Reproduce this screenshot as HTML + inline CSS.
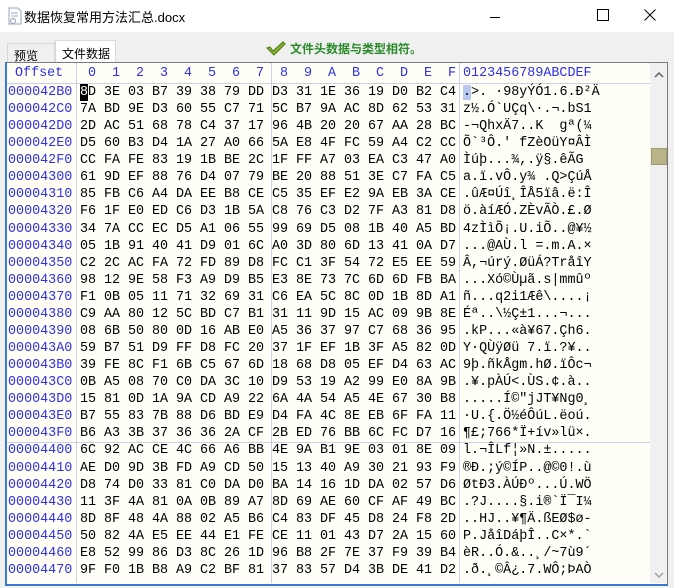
<!DOCTYPE html>
<html><head><meta charset="utf-8"><style>
*{margin:0;padding:0;box-sizing:border-box}
body{width:674px;height:588px;background:#f0f0f0;position:relative;overflow:hidden;font-family:"Liberation Sans","Noto Sans CJK SC",sans-serif}
#title{position:absolute;left:0;top:0;width:674px;height:32px;background:#fff}
#title .t{position:absolute;left:24px;top:7px;font-size:13px;color:#000}
#tabs .tab{position:absolute;font-size:12px;color:#000;border:1px solid #d9d9d9;border-bottom:none;white-space:nowrap}
#panel{position:absolute;left:5px;top:62px;width:663px;height:524px;border:1px solid #7a7a7a;border-left:2px solid #3a78d8;border-bottom:2px solid #3a78d8;background:#fffff8;overflow:hidden}
.mono{font-family:"Liberation Mono",monospace;font-size:13.4px;white-space:pre}
.row{position:absolute;left:0;height:17px;line-height:17px}
.off{position:absolute;left:1px;color:#3030e8}
.hx{position:absolute;left:73px;color:#000}
.hx span{display:inline-block;width:24px}
.hh{position:absolute;left:73px;color:#3030e8}
.hh span{display:inline-block;width:24px;text-align:center}
.as{position:absolute;left:456px;color:#000}
.vl{position:absolute;top:0;width:1px;background:#c8d0ec;height:520px}
#sb{position:absolute;left:643px;top:0;width:18px;height:520px;background:#f0f0f0}
</style></head><body>
<div id="title">
<svg style="position:absolute;left:7px;top:7px" width="16" height="18" viewBox="0 0 16 18"><path d="M2 1h9l3 3v13H2z" fill="#fff" stroke="#9aa4c0"/><path d="M4 6h7M4 9h7M4 12h4" stroke="#9aa4c0"/><circle cx="6" cy="14" r="2.5" fill="none" stroke="#9aa4c0"/></svg>
<div class="t">数据恢复常用方法汇总.docx</div>
<svg style="position:absolute;left:488px;top:10px" width="14" height="14"><path d="M2 7.5h10" stroke="#000"/></svg>
<svg style="position:absolute;left:596px;top:8px" width="14" height="14"><rect x="1.5" y="1.5" width="11" height="11" fill="none" stroke="#000"/></svg>
<svg style="position:absolute;left:643px;top:8px" width="14" height="14"><path d="M1.5 1.5l11 11M12.5 1.5l-11 11" stroke="#000"/></svg>
</div>
<div id="tabs">
<div class="tab" style="left:7px;top:43px;width:48px;height:20px;padding:3px 0 0 6px">预览</div>
<div class="tab" style="left:55px;top:40px;width:61px;height:23px;background:#fff;padding:4px 0 0 6px">文件数据</div>
</div>
<svg style="position:absolute;left:265px;top:40px" width="22" height="16" viewBox="0 0 22 16"><path d="M2 8l3 -1 3 4 10-9 2 2-11 11z" fill="#8ab030" stroke="#4a7a10" stroke-width="1"/></svg>
<div style="position:absolute;left:290px;top:40px;font-size:12px;font-weight:bold;color:#2a8a2a">文件头数据与类型相符。</div>
<div id="panel">
<div class="vl" style="left:69px"></div>
<div class="vl" style="left:264px"></div>
<div class="vl" style="left:452px"></div>
<div style="position:absolute;left:0;top:20px;width:643px;height:1px;background:#c8d0ec"></div>
<div style="position:absolute;left:0;top:379px;width:643px;height:1px;background:#c8d0ec"></div>
<div class="row mono" style="top:2px;color:#3030e8"><span style="position:absolute;left:8px">Offset</span><span class="hh"><span>0</span><span>1</span><span>2</span><span>3</span><span>4</span><span>5</span><span>6</span><span>7</span><span>8</span><span>9</span><span>A</span><span>B</span><span>C</span><span>D</span><span>E</span><span>F</span></span></div>
<div id="rows"></div>
<div id="sb">
<svg style="position:absolute;left:4px;top:8px" width="10" height="8"><path d="M1 6l4-4 4 4" fill="none" stroke="#606060" stroke-width="1.5"/></svg>
<div style="position:absolute;left:1px;top:85px;width:16px;height:17px;background:#b8b488;border:1px solid #a09c70"></div>
<svg style="position:absolute;left:4px;top:508px" width="10" height="8"><path d="M1 2l4 4 4-4" fill="none" stroke="#a0a0a0" stroke-width="1.5"/></svg>
</div>
</div>
<script>
var d=[
["000042B0","8D 3E 03 B7 39 38 79 DD D3 31 1E 36 19 D0 B2 C4","▒>. ·98yÝÓ1.6.Ð²Ä"],
["000042C0","7A BD 9E D3 60 55 C7 71 5C B7 9A AC 8D 62 53 31","z½.Ó`UÇq\\·.¬.bS1"],
["000042D0","2D AC 51 68 78 C4 37 17 96 4B 20 20 67 AA 28 BC","-¬QhxÄ7..K  gª(¼"],
["000042E0","D5 60 B3 D4 1A 27 A0 66 5A E8 4F FC 59 A4 C2 CC","Õ`³Ô.' fZèOüY¤ÂÌ"],
["000042F0","CC FA FE 83 19 1B BE 2C 1F FF A7 03 EA C3 47 A0","Ìúþ...¾,.ÿ§.êÃG "],
["00004300","61 9D EF 88 76 D4 07 79 BE 20 88 51 3E C7 FA C5","a.ï.vÔ.y¾ .Q>ÇúÅ"],
["00004310","85 FB C6 A4 DA EE B8 CE C5 35 EF E2 9A EB 3A CE",".ûÆ¤Úî¸ÎÅ5ïâ.ë:Î"],
["00004320","F6 1F E0 ED C6 D3 1B 5A C8 76 C3 D2 7F A3 81 D8","ö.àíÆÓ.ZÈvÃÒ.£.Ø"],
["00004330","34 7A CC EC D5 A1 06 55 99 69 D5 08 1B 40 A5 BD","4zÌìÕ¡.U.iÕ..@¥½"],
["00004340","05 1B 91 40 41 D9 01 6C A0 3D 80 6D 13 41 0A D7","...@AÙ.l =.m.A.×"],
["00004350","C2 2C AC FA 72 FD 89 D8 FC C1 3F 54 72 E5 EE 59","Â,¬úrý.ØüÁ?TråîY"],
["00004360","98 12 9E 58 F3 A9 D9 B5 E3 8E 73 7C 6D 6D FB BA","...Xó©Ùµã.s|mmûº"],
["00004370","F1 0B 05 11 71 32 69 31 C6 EA 5C 8C 0D 1B 8D A1","ñ...q2i1Æê\\....¡"],
["00004380","C9 AA 80 12 5C BD C7 B1 31 11 9D 15 AC 09 9B 8E","Éª..\\½Ç±1...¬..."],
["00004390","08 6B 50 80 0D 16 AB E0 A5 36 37 97 C7 68 36 95",".kP...«à¥67.Çh6."],
["000043A0","59 B7 51 D9 FF D8 FC 20 37 1F EF 1B 3F A5 82 0D","Y·QÙÿØü 7.ï.?¥.."],
["000043B0","39 FE 8C F1 6B C5 67 6D 18 68 D8 05 EF D4 63 AC","9þ.ñkÅgm.hØ.ïÔc¬"],
["000043C0","0B A5 08 70 C0 DA 3C 10 D9 53 19 A2 99 E0 8A 9B",".¥.pÀÚ<.ÙS.¢.à.."],
["000043D0","15 81 0D 1A 9A CD A9 22 6A 4A 54 A5 4E 67 30 B8",".....Í©\"jJT¥Ng0¸"],
["000043E0","B7 55 83 7B 88 D6 BD E9 D4 FA 4C 8E EB 6F FA 11","·U.{.Ö½éÔúL.ëoú."],
["000043F0","B6 A3 3B 37 36 36 2A CF 2B ED 76 BB 6C FC D7 16","¶£;766*Ï+ív»lü×."],
["00004400","6C 92 AC CE 4C 66 A6 BB 4E 9A B1 9E 03 01 8E 09","l.¬ÎLf¦»N.±....."],
["00004410","AE D0 9D 3B FD A9 CD 50 15 13 40 A9 30 21 93 F9","®Ð.;ý©ÍP..@©0!.ù"],
["00004420","D8 74 D0 33 81 C0 DA D0 BA 14 16 1D DA 02 57 D6","ØtÐ3.ÀÚÐº...Ú.WÖ"],
["00004430","11 3F 4A 81 0A 0B 89 A7 8D 69 AE 60 CF AF 49 BC",".?J....§.i®`Ï¯I¼"],
["00004440","8D 8F 48 4A 88 02 A5 B6 C4 83 DF 45 D8 24 F8 2D","..HJ..¥¶Ä.ßEØ$ø-"],
["00004450","50 82 4A E5 EE 44 E1 FE CE 11 01 43 D7 2A 15 60","P.JåîDáþÎ..C×*.`"],
["00004460","E8 52 99 86 D3 8C 26 1D 96 B8 2F 7E 37 F9 39 B4","èR..Ó.&..¸/~7ù9´"],
["00004470","9F F0 1B B8 A9 C2 BF 81 37 83 57 D4 3B DE 41 D2",".ð.¸©Â¿.7.WÔ;ÞAÒ"]];
var h='<div class="row mono" style="top:2px"><span class="as" style="color:#3030e8">0123456789ABCDEF</span></div>';
function esc(s){return s.replace(/&/g,'&amp;').replace(/</g,'&lt;').replace(/>/g,'&gt;');}
for(var i=0;i<d.length;i++){
var t=21+i*17.07,b=d[i][1].split(' ');
var hs='';for(var j=0;j<16;j++){var v=b[j];if(i==0&&j==0)v='<span style="background:#000;color:#fff;width:auto">8</span>D';hs+='<span>'+v+'</span>';}
var a=esc(d[i][2]);if(i==0)a='<span style="background:#b8c8f0">.</span>'+esc(d[i][2].slice(1));
h+='<div class="row mono" style="top:'+t+'px"><span class="off">'+d[i][0]+'</span><span class="hx">'+hs+'</span><span class="as">'+a+'</span></div>';}
document.getElementById('rows').innerHTML=h;
</script>
</body></html>
